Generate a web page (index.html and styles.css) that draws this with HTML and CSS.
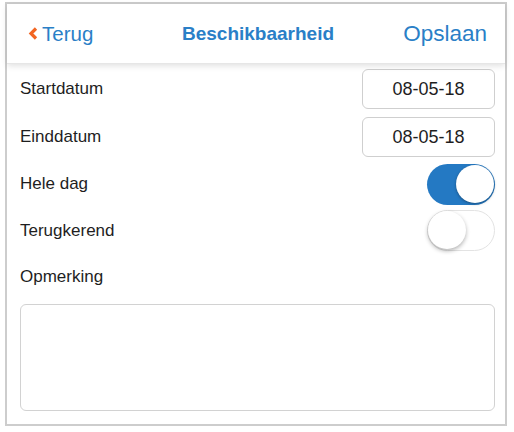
FILE: index.html
```html
<!DOCTYPE html>
<html>
<head>
<meta charset="utf-8">
<link rel="stylesheet" href="styles.css">
</head>
<body>
<div class="frame">
  <header class="nav">
    <div class="back">
      <svg class="chev" width="10" height="13" viewBox="0 0 10 13"><path d="M8 1.5 L3 6.5 L8 11.5" fill="none" stroke="#f26522" stroke-width="3.2"/></svg>
      <span>Terug</span>
    </div>
    <div class="title">Beschikbaarheid</div>
    <div class="save">Opslaan</div>
  </header>
  <main class="content">
    <div class="row r1">
      <span class="label">Startdatum</span>
      <div class="date">08-05-18</div>
    </div>
    <div class="row r2">
      <span class="label">Einddatum</span>
      <div class="date">08-05-18</div>
    </div>
    <div class="row r3">
      <span class="label">Hele dag</span>
      <div class="switch on"><div class="knob"></div></div>
    </div>
    <div class="row r4">
      <span class="label">Terugkerend</span>
      <div class="switch off"><div class="knob"></div></div>
    </div>
    <div class="row r5">
      <span class="label">Opmerking</span>
    </div>
    <div class="textarea"></div>
  </main>
</div>
</body>
</html>
```

FILE: styles.css
```css
html, body {
  margin: 0;
  padding: 0;
  background: #fff;
}
body {
  padding: 2px 7px 0 5px;
  font-family: "Liberation Sans", Arial, sans-serif;
}
.frame {
  border: 2px solid #cdcdcd;
  height: 424px;
  box-sizing: border-box;
  display: flex;
  flex-direction: column;
}
.nav {
  height: 59px;
  display: flex;
  align-items: center;
  position: relative;
  box-shadow: 0 2px 6px rgba(0,0,0,0.12);
  border-bottom: 1px solid #e6e6e6;
  z-index: 1;
}
.back {
  display: flex;
  align-items: center;
  margin-left: 21px;
  color: #2a7fc7;
  font-size: 20.5px;
  width: 148px;
}
.chev {
  margin-right: 4px;
}
.title {
  flex: 1;
  color: #2a7fc7;
  font-size: 19px;
  font-weight: bold;
  margin-left: 6px;
}
.save {
  color: #2a7fc7;
  font-size: 22.5px;
  margin-right: 18px;
}
.content {
  display: flex;
  flex-direction: column;
  padding: 5px 10px 0 13px;
}
.row {
  display: flex;
  align-items: center;
  justify-content: space-between;
  height: 40px;
}
.r2 { margin-top: 8px; }
.r3 { margin-top: 6px; height: 42px; }
.r4 { margin-top: 5px; height: 41px; }
.r5 { margin-top: 6px; }
.label {
  font-size: 17px;
  color: #1e1e1e;
}
.date {
  width: 131px;
  height: 38px;
  border: 1px solid #cfcfcf;
  border-radius: 6px;
  display: flex;
  align-items: center;
  justify-content: center;
  font-size: 18px;
  color: #1e1e1e;
}
.switch {
  width: 68px;
  height: 41px;
  border-radius: 21px;
  box-sizing: border-box;
  position: relative;
}
.switch.on {
  background: #2479c3;
}
.switch.off {
  background: #fff;
  border: 1.5px solid #e3e3e3;
}
.knob {
  position: absolute;
  width: 38px;
  height: 38px;
  border-radius: 50%;
  background: #fff;
  top: 1.5px;
}
.on .knob {
  right: 1.5px;
  box-shadow: 0 1px 3px rgba(0,0,0,0.35);
}
.off .knob {
  left: 0;
  top: 0;
  box-shadow: 0 2px 4px rgba(0,0,0,0.3);
}
.textarea {
  margin-top: 7px;
  height: 105px;
  border: 1px solid #d2d2d2;
  border-radius: 6px;
}
```
